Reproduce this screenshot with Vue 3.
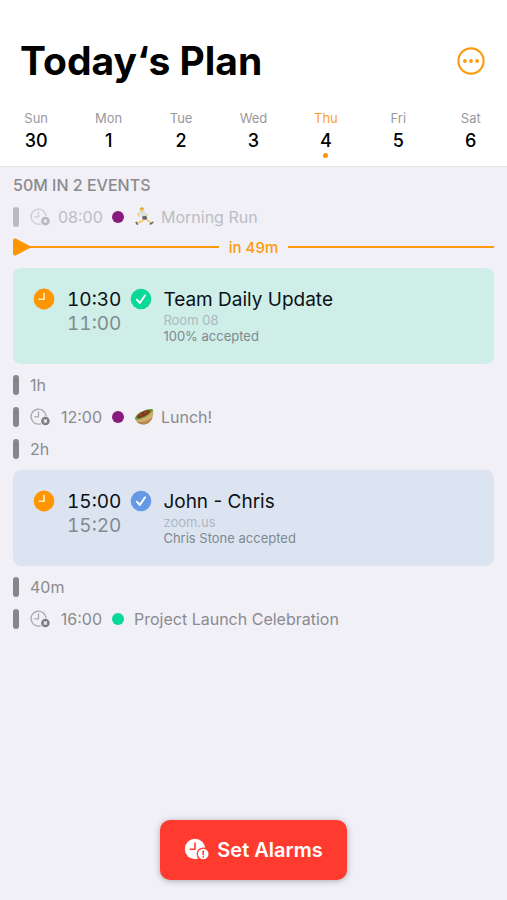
<script setup>
import { ref } from 'vue'

const days = [
  { name: 'Sun', date: 30 },
  { name: 'Mon', date: 1 },
  { name: 'Tue', date: 2 },
  { name: 'Wed', date: 3 },
  { name: 'Thu', date: 4 },
  { name: 'Fri', date: 5 },
  { name: 'Sat', date: 6 },
]
const selected = ref(4)

const items = [
  { type: 'minor', time: '08:00', color: 'purple', emoji: 'run', title: 'Morning Run', past: true },
  { type: 'now', label: 'in 49m' },
  { type: 'card', start: '10:30', end: '11:00', color: 'green', title: 'Team Daily Update', place: 'Room 08', status: '100% accepted' },
  { type: 'gap', label: '1h' },
  { type: 'minor', time: '12:00', color: 'purple', emoji: 'lunch', title: 'Lunch!' },
  { type: 'gap', label: '2h' },
  { type: 'card', start: '15:00', end: '15:20', color: 'blue', title: 'John - Chris', place: 'zoom.us', status: 'Chris Stone accepted' },
  { type: 'gap', label: '40m' },
  { type: 'minor', time: '16:00', color: 'green', title: 'Project Launch Celebration' },
]
</script>

<template>
  <div class="screen">
    <header class="header">
      <div class="title-row">
        <h1>Today‘s Plan</h1>
        <button class="more" type="button" aria-label="More options">
          <svg width="28" height="28" viewBox="0 0 28 28">
            <circle cx="14" cy="14" r="12.6" fill="none" stroke="#fb9a0e" stroke-width="2.1" />
            <circle cx="7.9" cy="14" r="1.9" fill="#fb9a0e" />
            <circle cx="14" cy="14" r="1.9" fill="#fb9a0e" />
            <circle cx="20.1" cy="14" r="1.9" fill="#fb9a0e" />
          </svg>
        </button>
      </div>
      <nav class="week">
        <button
          v-for="day in days"
          :key="day.date"
          type="button"
          class="day"
          :class="{ active: day.date === selected }"
          @click="selected = day.date"
        >
          <span class="day-name">{{ day.name }}</span>
          <span class="day-date">{{ day.date }}</span>
          <span class="day-dot"></span>
        </button>
      </nav>
    </header>

    <main class="agenda">
      <h2>50M IN 2 EVENTS</h2>
      <template v-for="(item, i) in items" :key="i">
        <div v-if="item.type === 'now'" class="now">
          <div class="now-half">
            <svg width="18" height="18" viewBox="0 0 18 18">
              <path d="M0 3C0 .9 1.3.1 3.2.8L14 6.4Q16 7.9 18 8V10Q16 10.1 14 11.6L3.2 17.2C1.3 17.9 0 17.1 0 15Z" fill="#ff9500" />
            </svg>
            <span class="now-line"></span>
          </div>
          <span class="now-label">{{ item.label }}</span>
          <div class="now-half">
            <span class="now-line"></span>
          </div>
        </div>

        <div v-else-if="item.type === 'gap'" class="row">
          <span class="bar"></span>
          <span>{{ item.label }}</span>
        </div>

        <div v-else-if="item.type === 'minor'" class="row" :class="{ past: item.past }">
          <span class="bar"></span>
          <svg class="clock-off" width="20" height="18" viewBox="0 0 20 18">
            <path d="M10.4 15.9A7.5 7.5 0 1 1 16 7.6" fill="none" stroke="#a9a9ae" stroke-width="1.4" stroke-linecap="round" />
            <path d="M8.5 3.8V8.8H4.6" fill="none" stroke="#a9a9ae" stroke-width="1.3" stroke-linecap="round" stroke-linejoin="round" />
            <circle cx="15.4" cy="13" r="4.3" fill="#7c7c81" />
            <path d="M14.4 12l2 2M16.4 12l-2 2" stroke="#f1f0f6" stroke-width="1.6" stroke-linecap="round" />
          </svg>
          <span class="time">{{ item.time }}</span>
          <span class="dot" :class="item.color"></span>
          <svg v-if="item.emoji === 'run'" class="emoji" width="20" height="20" viewBox="0 0 20 20">
            <path d="M10.2 11.6L8 14.2L3.8 16" fill="none" stroke="#f2c75f" stroke-width="1.8" stroke-linecap="round" stroke-linejoin="round" />
            <path d="M11.6 11.4L14 13.6L17 15.9" fill="none" stroke="#f2c75f" stroke-width="1.8" stroke-linecap="round" stroke-linejoin="round" />
            <path d="M5.8 5.4L3.8 7.4L5.4 9.2M11.6 6.6L13 8.9" fill="none" stroke="#f2c75f" stroke-width="1.3" stroke-linecap="round" stroke-linejoin="round" />
            <path d="M5.2 5Q8 3.2 11.2 4.8L12.4 9.4L8 10.2Z" fill="#d5e1df" />
            <path d="M8 9.6L12.2 8.9L13.2 11.6L11.4 12.8L8.6 12.2Z" fill="#4b515b" />
            <circle cx="7.8" cy="2.6" r="2" fill="#f3bb45" />
            <path d="M5.8 2.2Q6.4 0 8.6.6Q9.8 1 9.6 2Q7.8 1.2 5.8 2.2Z" fill="#c9953a" />
            <path d="M2.2 15.4L3.4 17.2M16.4 17L18.8 15.4" stroke="#55575e" stroke-width="1.6" stroke-linecap="round" />
          </svg>
          <svg v-if="item.emoji === 'lunch'" class="emoji" width="20" height="20" viewBox="0 0 20 20">
            <path d="M.8 11.4Q2 7.6 6.5 5.2Q13 1.4 18.6 2L19 6L4 14Z" fill="#65902f" />
            <path d="M3 11Q3.6 7 8.6 4.8Q13.4 2.4 16.4 3.8L14.6 8L5 12.4Z" fill="#7d3922" />
            <path d="M5.4 8.4l1.6-1.2 1 1M10.4 6l1.6-.8 1 1" fill="none" stroke="#b0502f" stroke-width="1.2" />
            <path d="M1 11.8Q4.6 12.8 8.5 10.8Q12 10 14.5 7.5Q17 5.8 19 2.8C20.3 9 17.2 15.9 11.3 17.3C6.5 18.2 2.2 15.5 1 11.8Z" fill="#d3ad72" />
            <path d="M2.6 14.4Q11 16.4 18.6 10.2Q16.5 16 11.3 17.3C7.5 18 4.2 16.5 2.6 14.4Z" fill="#b3884e" />
            <path d="M1 11.8Q4.6 12.8 8.5 10.8Q12 10 14.5 7.5Q17 5.8 18.8 3.2" fill="none" stroke="#7aa53d" stroke-width="1.1" />
          </svg>
          <span>{{ item.title }}</span>
        </div>

        <article v-else class="card" :class="'card-' + item.color">
          <svg class="badge" width="22" height="22" viewBox="0 0 22 22">
            <circle cx="11" cy="11" r="10.4" fill="#ff9500" />
            <path d="M11 5.4V11.3H6.2" fill="none" stroke="#fff0d2" stroke-width="1.6" stroke-linecap="round" stroke-linejoin="round" />
          </svg>
          <div class="times">
            <span>{{ item.start }}</span>
            <span class="end">{{ item.end }}</span>
          </div>
          <svg class="badge check" width="22" height="22" viewBox="0 0 22 22">
            <circle cx="11" cy="11" r="10.3" :class="item.color" />
            <path d="M6.9 11.7L9.8 15L15 7.4" fill="none" stroke="#fff" stroke-width="1.9" stroke-linecap="round" stroke-linejoin="round" />
          </svg>
          <div class="details">
            <h3>{{ item.title }}</h3>
            <p class="place">{{ item.place }}</p>
            <p class="status">{{ item.status }}</p>
          </div>
        </article>
      </template>
    </main>

    <footer class="footer">
      <button class="set-alarms" type="button">
        <svg width="26" height="24" viewBox="0 0 26 24">
          <circle cx="11" cy="11" r="10.2" fill="#fff" />
          <path d="M11 5V11.3H6.2" fill="none" stroke="#ff3b30" stroke-width="1.6" stroke-linecap="round" stroke-linejoin="round" />
          <circle cx="19.2" cy="16" r="6.6" fill="#ff3b30" />
          <circle cx="19.2" cy="16" r="5.3" fill="#fff" />
          <path d="M19.2 13V16.6" stroke="#ff3b30" stroke-width="1.6" stroke-linecap="round" />
          <circle cx="19.2" cy="18.8" r="0.9" fill="#ff3b30" />
        </svg>
        <span>Set Alarms</span>
      </button>
    </footer>
  </div>
</template>

<style>
body {
  margin: 0;
  background: #f1f0f6;
}
</style>

<style scoped>
.screen {
  display: flex;
  flex-direction: column;
  box-sizing: border-box;
  min-height: 100vh;
  background: #f1f0f6;
  color: #8a8a8f;
  font-family: Inter, 'Liberation Sans', sans-serif;
  font-size: 16px;
}
h1,
h2,
h3,
p {
  margin: 0;
}
button {
  border: 0;
  padding: 0;
  background: none;
  font: inherit;
  cursor: pointer;
}
svg {
  display: block;
  flex: none;
}
.header {
  padding-top: 36px;
  background: #fff;
  border-bottom: 1px solid #e6e6ea;
}
.title-row {
  display: flex;
  align-items: center;
  justify-content: space-between;
  padding: 0 22px 0 20px;
}
h1 {
  color: #000;
  font-size: 39px;
  line-height: 50px;
  font-weight: 700;
}
.week {
  display: grid;
  grid-template-columns: repeat(7, 1fr);
  padding: 22px 0 0;
}
.day {
  display: flex;
  flex-direction: column;
  align-items: center;
  padding-bottom: 8px;
}
.day-name {
  color: #99999c;
  font-size: 13px;
  line-height: 20px;
}
.day-date {
  color: #000;
  font-size: 18px;
  font-weight: 500;
  line-height: 25px;
}
.day-dot {
  width: 5px;
  height: 5px;
  border-radius: 50%;
}
.active .day-name {
  color: #ff9f1c;
}
.active .day-dot {
  background: #ff9500;
}
.agenda {
  padding: 8px 13px 0;
}
h2 {
  font-size: 16px;
  line-height: 20px;
  font-weight: 500;
  padding-bottom: 6px;
}
.row {
  display: flex;
  align-items: center;
  height: 32px;
}
.past > :not(.dot) {
  opacity: 0.5;
}
.past > .emoji {
  opacity: 0.9;
}
.bar {
  width: 6px;
  height: 20px;
  margin-right: 11px;
  border-radius: 3px;
  background: #86858b;
}
.time {
  width: 44px;
  margin: 0 10px 0 8px;
  text-align: right;
}
.dot {
  width: 12px;
  height: 12px;
  margin-right: 10px;
  border-radius: 50%;
}
.dot.purple {
  background: #881b7f;
}
.dot.green {
  background: #08d898;
}
.emoji {
  margin-right: 7px;
}
.now {
  display: flex;
  align-items: center;
  height: 28px;
  padding-bottom: 2px;
  color: #fb9a0e;
}
.now-half {
  display: flex;
  align-items: center;
  flex: 1;
}
.now-line {
  flex: 1;
  height: 2px;
  background: #fb9a0e;
}
.now-label {
  padding: 0 10px;
  font-size: 15px;
  font-weight: 500;
}
.card {
  display: flex;
  align-items: flex-start;
  box-sizing: border-box;
  min-height: 96px;
  margin: 5px 0;
  padding: 20px 20px 18px;
  border-radius: 8px;
}
.card-green {
  background: #ceeee7;
}
.card-blue {
  background: #dce4f2;
}
.badge {
  margin-right: 12px;
}
.check {
  margin: 0 11px 0 9px;
}
.check .green {
  fill: #08d898;
}
.check .blue {
  fill: #6699e5;
}
.times {
  display: flex;
  flex-direction: column;
  color: #0b1116;
  font-size: 19px;
  line-height: 24px;
  font-variant-numeric: tabular-nums;
}
.end {
  color: #7f8c92;
}
.details {
  min-width: 0;
}
h3 {
  color: #0b1116;
  font-size: 19px;
  line-height: 24px;
  font-weight: 400;
}
.place,
.status {
  font-size: 13px;
  line-height: 16px;
}
.place {
  color: #acb9c1;
}
.status {
  color: #7f898f;
}
.footer {
  display: flex;
  justify-content: center;
  margin-top: auto;
  padding: 20px 0;
}
.set-alarms {
  display: flex;
  align-items: center;
  gap: 7px;
  height: 60px;
  padding: 0 24px;
  border-radius: 10px;
  background: #ff3b30;
  box-shadow: 0 1px 6px rgba(40, 40, 70, 0.35);
  color: #fff;
  font-size: 20px;
  font-weight: 600;
}
</style>
